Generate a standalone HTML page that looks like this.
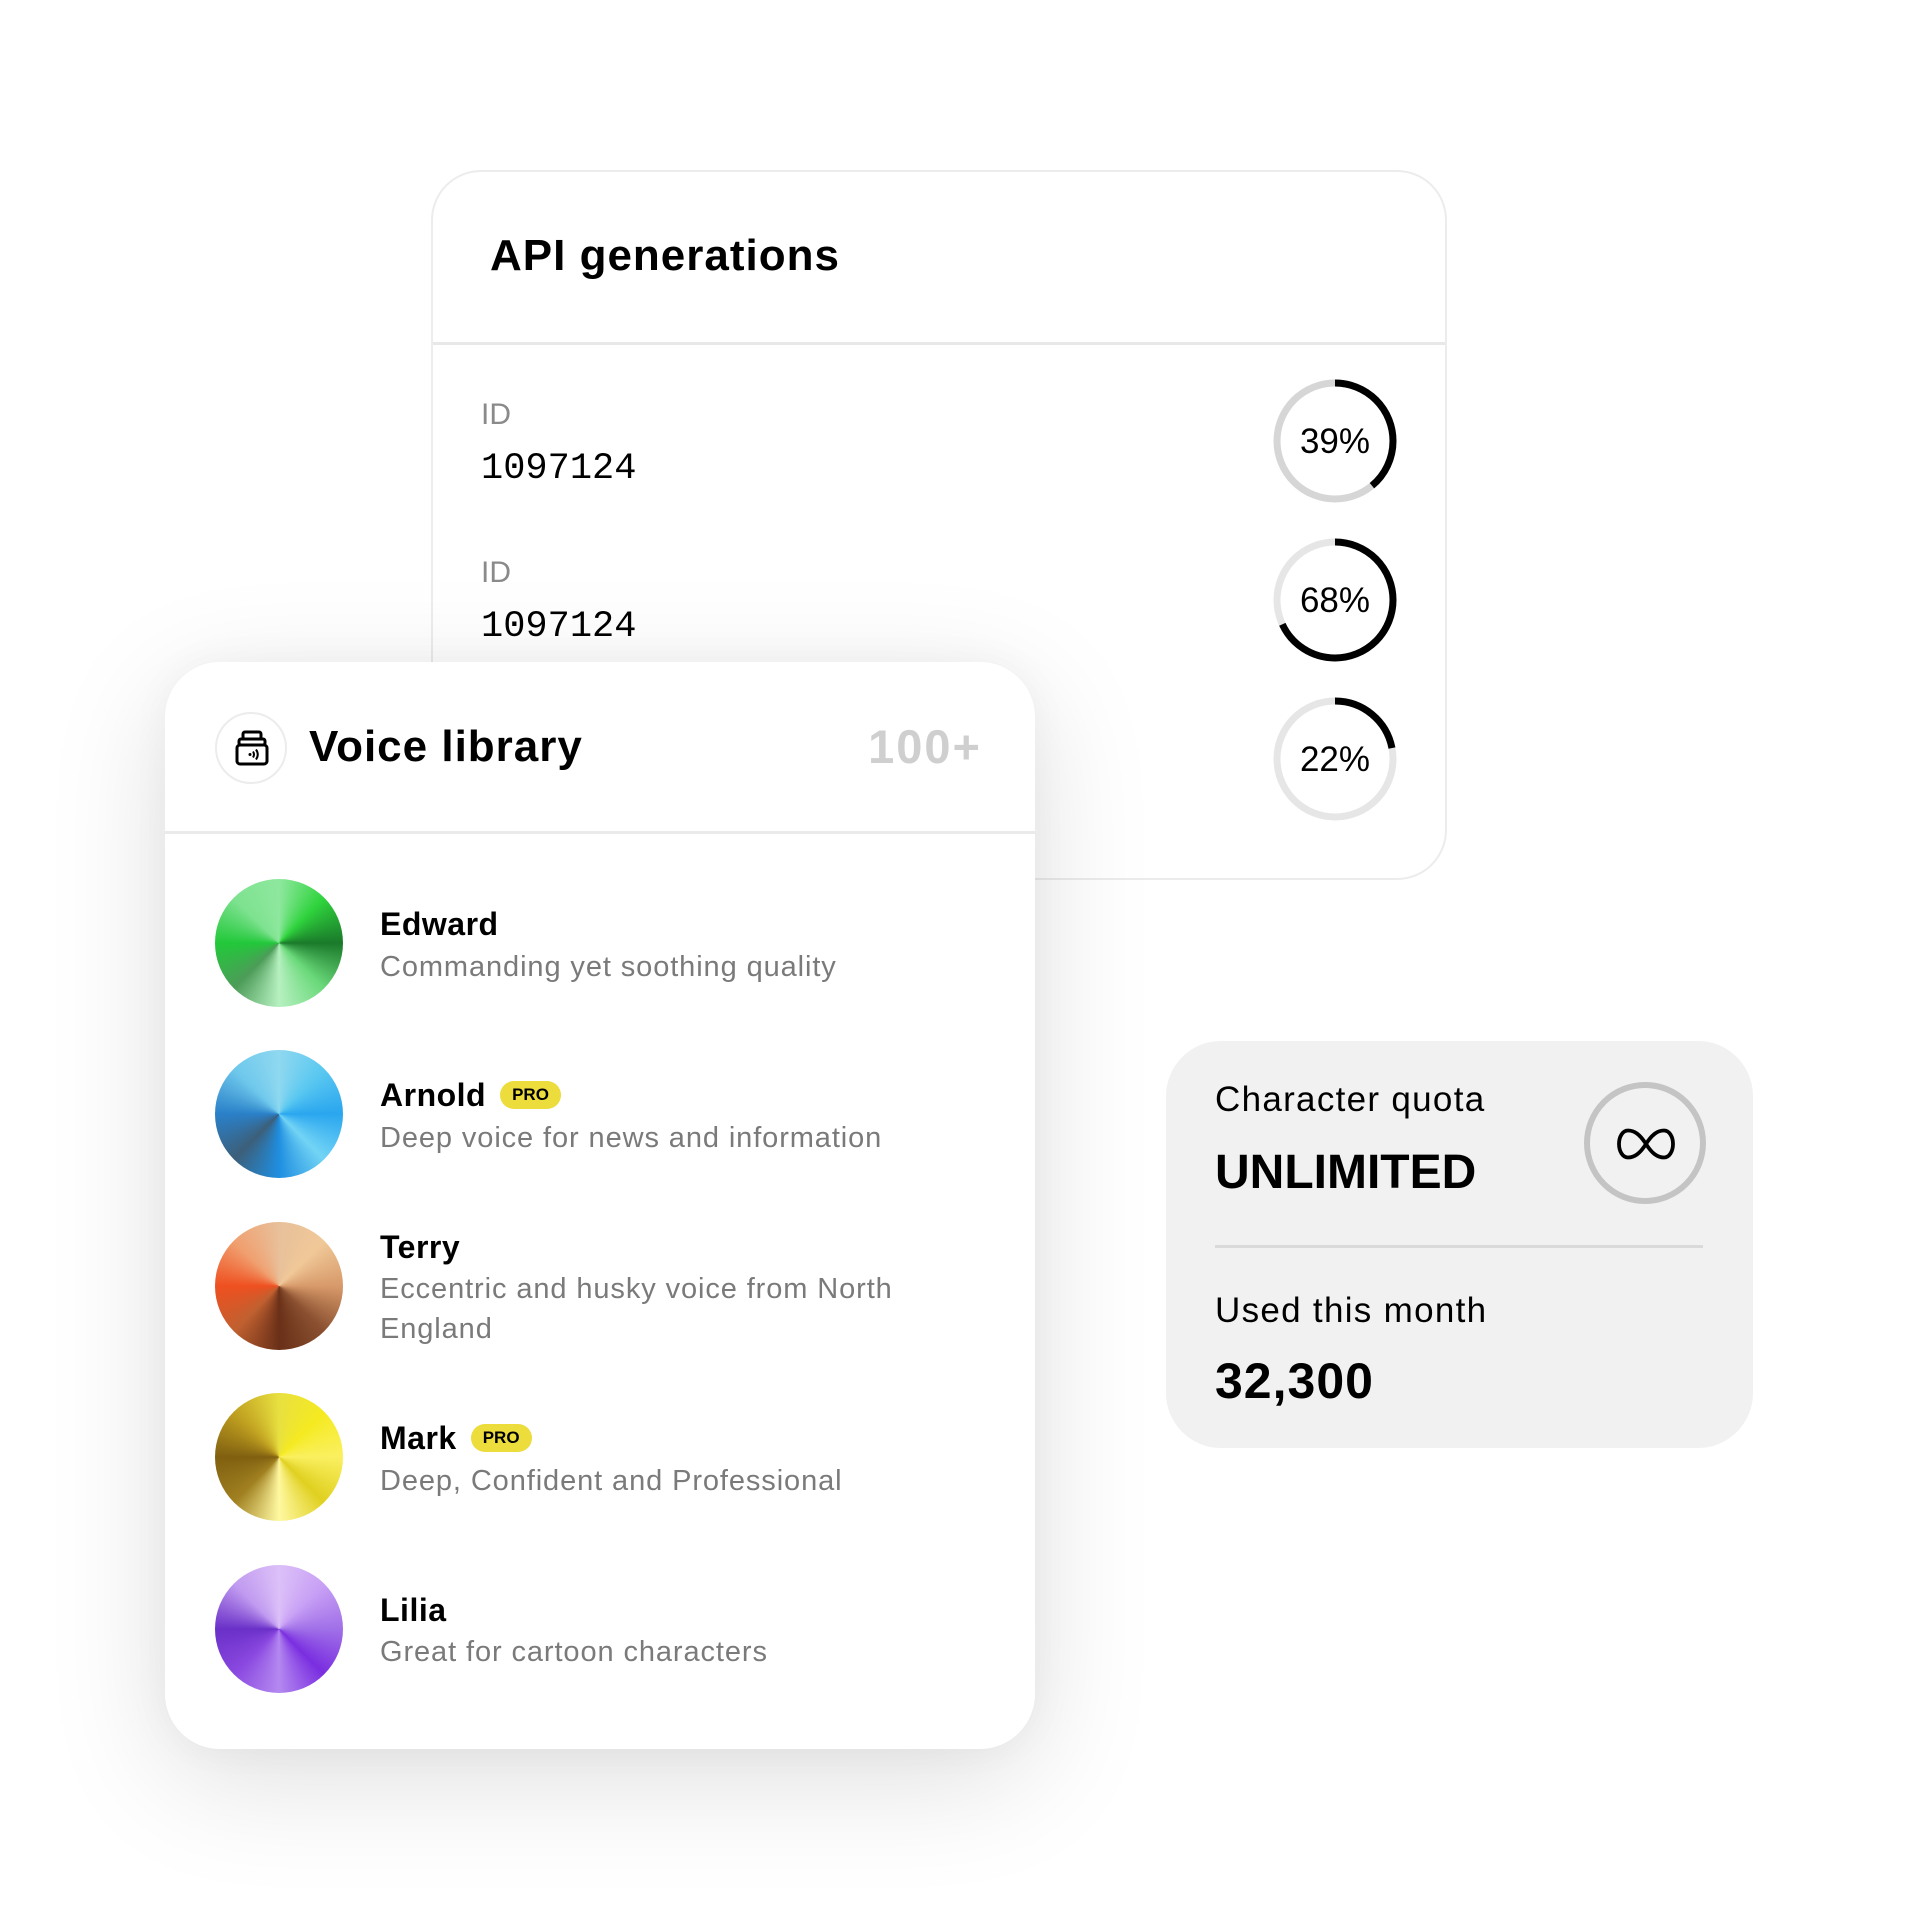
<!DOCTYPE html>
<html><head><meta charset="utf-8"><style>
*{margin:0;padding:0;box-sizing:border-box}
body{width:1920px;height:1920px;background:#fff;position:relative;overflow:hidden;font-family:"Liberation Sans",sans-serif;color:#000}
.a{position:absolute;white-space:nowrap}
.card1{position:absolute;left:431px;top:170px;width:1016px;height:710px;border:2px solid #ececec;border-radius:50px;background:#fff}
.card2{position:absolute;left:165px;top:662px;width:870px;height:1087px;border-radius:55px;background:#fff;box-shadow:0 30px 120px rgba(0,0,0,0.13),0 0 40px rgba(0,0,0,0.04)}
.card3{position:absolute;left:1166px;top:1041px;width:587px;height:407px;border-radius:55px;background:#f1f1f1}
.av{position:absolute;width:128px;height:128px;border-radius:50%;left:215px}
.nm{position:absolute;left:380px;font-size:32px;font-weight:bold;line-height:40px;letter-spacing:0.5px}
.ds{position:absolute;left:380px;font-size:29px;color:#7a7a7a;line-height:40px;letter-spacing:0.9px}
.pro{display:inline-block;vertical-align:middle;margin-left:14px;background:#ecdc3c;border-radius:14px;font-size:17px;font-weight:bold;padding:4px 12px;line-height:20px;position:relative;top:-3px;letter-spacing:0}
.id{position:absolute;left:481px;font-size:30px;color:#8a8a8a}
.num{position:absolute;left:481px;font-size:37px;font-family:"Liberation Mono",monospace}
</style></head><body>
<div class="card1">
  <div class="a" style="left:57px;top:58px;font-size:44px;font-weight:bold;line-height:52px;letter-spacing:1px">API generations</div>
  <div style="position:absolute;left:0;right:0;top:170px;height:3px;background:#e8e8e8"></div>
</div>
<div class="id" style="top:398px">ID</div>
<div class="num" style="top:448px">1097124</div>
<div class="id" style="top:556px">ID</div>
<div class="num" style="top:606px">1097124</div>
<svg class="a" style="left:1270px;top:376px" width="130" height="450" viewBox="0 0 130 450">
 <g fill="none" stroke-width="7">
  <circle cx="65" cy="65" r="58" stroke="#d6d6d6"/>
  <circle cx="65" cy="65" r="58" stroke="#000" stroke-dasharray="142 400" transform="rotate(-90 65 65)"/>
  <circle cx="65" cy="224" r="58" stroke="#e6e6e6"/>
  <circle cx="65" cy="224" r="58" stroke="#000" stroke-dasharray="248 400" transform="rotate(-90 65 224)"/>
  <circle cx="65" cy="383" r="58" stroke="#e6e6e6"/>
  <circle cx="65" cy="383" r="58" stroke="#000" stroke-dasharray="80 400" transform="rotate(-90 65 383)"/>
 </g>
 <g font-family="Liberation Sans" font-size="35" text-anchor="middle">
  <text x="65" y="77">39%</text><text x="65" y="236">68%</text><text x="65" y="395">22%</text>
 </g>
</svg>

<div class="card2">
  <div style="position:absolute;left:50px;top:50px;width:72px;height:72px;border-radius:50%;border:2px solid #ececec"></div>
  <svg style="position:absolute;left:70px;top:68px" width="34" height="36" viewBox="0 0 34 36" fill="none" stroke="#000" stroke-width="3" stroke-linejoin="round">
    <rect x="8" y="2" width="18" height="7" rx="2"/>
    <rect x="4" y="9" width="26" height="6" rx="2"/>
    <rect x="2" y="15" width="30" height="19" rx="3"/>
    <circle cx="15" cy="24.5" r="1.5" fill="#000" stroke="none"/>
    <path d="M18 21.5q2 3 0 6M21 19.5q3.5 5 0 10" stroke-width="2"/>
  </svg>
  <div class="a" style="left:144px;top:59px;font-size:44px;font-weight:bold;line-height:52px;letter-spacing:1px">Voice library</div>
  <div class="a" style="right:53px;top:57px;font-size:47px;font-weight:bold;color:#cfcfcf;line-height:56px;letter-spacing:2px">100+</div>
  <div style="position:absolute;left:0;right:0;top:169px;height:3px;background:#eaeaea"></div>
</div>

<div class="av" style="top:879px;background:conic-gradient(from 0deg,#8ee89e,#2fd33d,#1a7a2a,#6ad97a,#b6f0c0,#4c9c58,#22c83a,#7ee290,#8ee89e)"></div>
<div class="nm" style="top:904px">Edward</div>
<div class="ds" style="top:947px">Commanding yet soothing quality</div>

<div class="av" style="top:1050px;background:conic-gradient(from 0deg,#8fd8f0,#5ac8f0,#2aa6ef,#72d4f5,#1f8ee0,#3c5f7a,#2a80c8,#6ec8ec,#8fd8f0)"></div>
<div class="nm" style="top:1075px">Arnold<span class="pro">PRO</span></div>
<div class="ds" style="top:1118px">Deep voice for news and information</div>

<div class="av" style="top:1222px;background:conic-gradient(from 0deg,#e8c09a,#f0c898,#d89a6a,#8a5030,#6a3018,#c06030,#ef5020,#f0a070,#e8c09a)"></div>
<div class="nm" style="top:1227px">Terry</div>
<div class="ds" style="top:1269px">Eccentric and husky voice from North</div>
<div class="ds" style="top:1309px">England</div>

<div class="av" style="top:1393px;background:conic-gradient(from 0deg,#e8e040,#f5ea20,#faf060,#e0d020,#fff8a0,#a08020,#806010,#c0a020,#e8e040)"></div>
<div class="nm" style="top:1418px">Mark<span class="pro">PRO</span></div>
<div class="ds" style="top:1461px">Deep, Confident and Professional</div>

<div class="av" style="top:1565px;background:conic-gradient(from 0deg,#dcc0f8,#c8a0f5,#a070e8,#7a2ee0,#b488f0,#8a48e0,#6a30c8,#c09af0,#dcc0f8)"></div>
<div class="nm" style="top:1590px">Lilia</div>
<div class="ds" style="top:1632px">Great for cartoon characters</div>

<div class="card3">
  <div class="a" style="left:49px;top:39px;font-size:35px;line-height:40px;letter-spacing:1.3px">Character quota</div>
  <div class="a" style="left:49px;top:104px;font-size:48px;font-weight:bold;line-height:56px">UNLIMITED</div>
  <div style="position:absolute;left:418px;top:41px;width:122px;height:122px;border-radius:50%;border:6px solid #c4c4c4"></div>
  <svg style="position:absolute;left:450px;top:85px" width="60" height="36" viewBox="0 0 66 40" fill="none" stroke="#000" stroke-width="4.2">
    <path d="M33 20C26 9 20 5 13 5C7 5 3 12 3 20C3 28 7 35 13 35C20 35 26 31 33 20C40 9 46 5 53 5C59 5 63 12 63 20C63 28 59 35 53 35C46 35 40 31 33 20Z"/>
  </svg>
  <div style="position:absolute;left:49px;right:50px;top:204px;height:3px;background:#dadada"></div>
  <div class="a" style="left:49px;top:250px;font-size:35px;line-height:40px;letter-spacing:1.3px">Used this month</div>
  <div class="a" style="left:49px;top:312px;font-size:50px;font-weight:bold;line-height:56px;letter-spacing:1px">32,300</div>
</div>
</body></html>
